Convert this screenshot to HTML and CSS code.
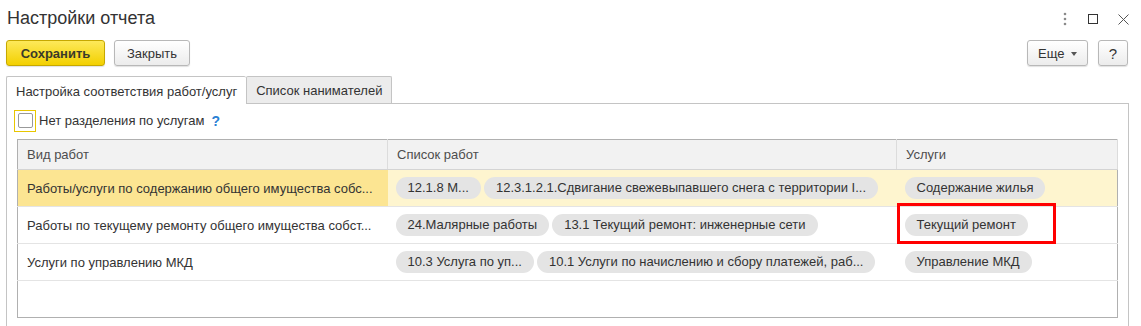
FILE: index.html
```html
<!DOCTYPE html>
<html lang="ru">
<head>
    <meta charset="UTF-8">
    <title>Настройки отчета</title>
    <link rel="stylesheet" href="styles.css">
</head>
<body>
    <div class="title-bar">
        <h1>Настройки отчета</h1>
        <div class="window-icons">
            <svg width="6" height="14" viewBox="0 0 6 14"><circle cx="3" cy="2" r="1.3" fill="#8a8a8a"/><circle cx="3" cy="7" r="1.3" fill="#8a8a8a"/><circle cx="3" cy="12" r="1.3" fill="#8a8a8a"/></svg>
            <svg width="10" height="10" viewBox="0 0 10 10"><rect x="0.5" y="0.5" width="9" height="9" fill="none" stroke="#333" stroke-width="1"/></svg>
            <svg width="11" height="11" viewBox="0 0 11 11"><path d="M0.5 0.5 L10.5 10.5 M10.5 0.5 L0.5 10.5" stroke="#555" stroke-width="1"/></svg>
        </div>
    </div>

    <div class="toolbar">
        <button class="btn btn-primary">Сохранить</button>
        <button class="btn">Закрыть</button>
        <div class="toolbar-right">
            <button class="btn btn-more">Еще <span class="caret"></span></button>
            <button class="btn btn-help">?</button>
        </div>
    </div>

    <div class="tabs">
        <div class="tab active">Настройка соответствия работ/услуг</div>
        <div class="tab">Список нанимателей</div>
    </div>

    <div class="panel">
        <label class="check-row">
            <span class="checkbox"><span class="checkbox-box"></span></span>
            <span>Нет разделения по услугам</span>
            <span class="hint">?</span>
        </label>

        <table class="grid">
            <colgroup>
                <col class="col-kind">
                <col class="col-list">
                <col class="col-service">
            </colgroup>
            <thead>
                <tr>
                    <th>Вид работ</th>
                    <th>Список работ</th>
                    <th>Услуги</th>
                </tr>
            </thead>
            <tbody>
                <tr class="selected">
                    <td class="current">Работы/услуги по содержанию общего имущества собс...</td>
                    <td><span class="chip">12.1.8 М...</span><span class="chip">12.3.1.2.1.Сдвигание свежевыпавшего снега с территории I...</span></td>
                    <td><span class="chip">Содержание жилья</span></td>
                </tr>
                <tr>
                    <td>Работы по текущему ремонту общего имущества собст...</td>
                    <td><span class="chip">24.Малярные работы</span><span class="chip">13.1 Текущий ремонт: инженерные сети</span></td>
                    <td class="marked"><span class="chip">Текущий ремонт</span><span class="mark"></span></td>
                </tr>
                <tr>
                    <td>Услуги по управлению МКД</td>
                    <td><span class="chip">10.3 Услуга по уп...</span><span class="chip">10.1 Услуги по начислению и сбору платежей, раб...</span></td>
                    <td><span class="chip">Управление МКД</span></td>
                </tr>
                <tr class="empty">
                    <td></td><td></td><td></td>
                </tr>
            </tbody>
        </table>
    </div>
</body>
</html>
```

FILE: styles.css
```css
body {
    margin: 0;
    font-family: "Liberation Sans", Arial, sans-serif;
    font-size: 13px;
    color: #333;
    background: #fff;
    overflow: hidden;
}

.title-bar {
    display: flex;
    align-items: center;
    justify-content: space-between;
    height: 36px;
    padding: 0 12px 0 7px;
}

.title-bar h1 {
    margin: 0;
    font-size: 18px;
    font-weight: normal;
    color: #333;
}

.window-icons {
    display: flex;
    align-items: center;
    gap: 20px;
    padding-top: 2px;
}

.toolbar {
    display: flex;
    align-items: center;
    gap: 9px;
    padding: 4px 13px 0 6px;
    height: 26px;
}

.toolbar-right {
    margin-left: auto;
    display: flex;
    gap: 10px;
}

.btn {
    height: 26px;
    padding: 0 12px;
    font-family: inherit;
    font-size: 13px;
    color: #333;
    border: 1px solid #b8b8b8;
    border-radius: 3px;
    background: linear-gradient(#ffffff, #ececec);
    box-shadow: 0 1px 1px rgba(0, 0, 0, 0.12);
}

.btn-primary {
    width: 99px;
    font-weight: bold;
    color: #3a3a2a;
    border-color: #c6a800;
    background: linear-gradient(#fde95a, #f3d000);
}

.btn-more {
    width: 61px;
    padding: 0 8px;
}

.caret {
    display: inline-block;
    margin-left: 3px;
    vertical-align: middle;
    border-left: 3px solid transparent;
    border-right: 3px solid transparent;
    border-top: 4px solid #555;
}

.btn-help {
    width: 30px;
    padding: 0;
    font-size: 15px;
}

.tabs {
    display: flex;
    margin: 10px 0 0 6px;
    height: 27px;
}

.tab {
    display: flex;
    align-items: center;
    padding: 0 9px;
    border: 1px solid #c4c4c4;
    border-bottom: none;
    background: #ececec;
    color: #333;
    border-radius: 2px 2px 0 0;
}

.tab.active {
    background: #fff;
    position: relative;
    z-index: 1;
    height: 28px;
    border-right: none;
}

.panel {
    margin: 0 12px 0 6px;
    border: 1px solid #c4c4c4;
    padding: 5px 10px 0 10px;
    height: 240px;
}

.check-row {
    display: flex;
    align-items: center;
    gap: 3px;
    height: 23px;
    margin-left: -3px;
}

.checkbox {
    width: 20px;
    height: 20px;
    border: 1px solid #e8c600;
    display: flex;
    align-items: center;
    justify-content: center;
}

.checkbox-box {
    width: 13px;
    height: 13px;
    border: 1px solid #999;
    border-radius: 2px;
    background: #fff;
}

.hint {
    margin-left: 4px;
    color: #2a7fd4;
    font-weight: bold;
    font-size: 14px;
}

.grid {
    margin-top: 7px;
    width: 1101px;
    border-collapse: collapse;
    table-layout: fixed;
    border: 1px solid #b0b0b0;
}

.col-kind { width: 370px; }
.col-list { width: 509px; }

.grid th {
    height: 29px;
    padding: 0 9px;
    text-align: left;
    font-weight: normal;
    color: #4d4d4d;
    background: #f2f2f2;
    border-right: 1px solid #dcdcdc;
    border-bottom: 1px solid #d4d4d4;
}

.grid td {
    height: 36px;
    padding: 0 8px 0 9px;
    white-space: nowrap;
    overflow: hidden;
    border-bottom: 1px solid #e4e4e4;
    color: #333;
}

.grid td + td {
    padding-left: 8px;
}

.grid tr.selected td {
    background: #fef5cf;
}

.grid tr.selected td.current {
    background: #fce592;
}

.grid tr.empty td {
    border-bottom: none;
}

.chip {
    display: inline-block;
    height: 22px;
    line-height: 22px;
    padding: 0 12px;
    margin-right: 3px;
    border-radius: 11px;
    background: #e4e4e4;
    color: #333;
}

.grid td.marked {
    position: relative;
    overflow: visible;
}

.mark {
    position: absolute;
    left: 0;
    top: -4px;
    width: 153px;
    height: 35px;
    border: 3px solid #f00;
}
```
